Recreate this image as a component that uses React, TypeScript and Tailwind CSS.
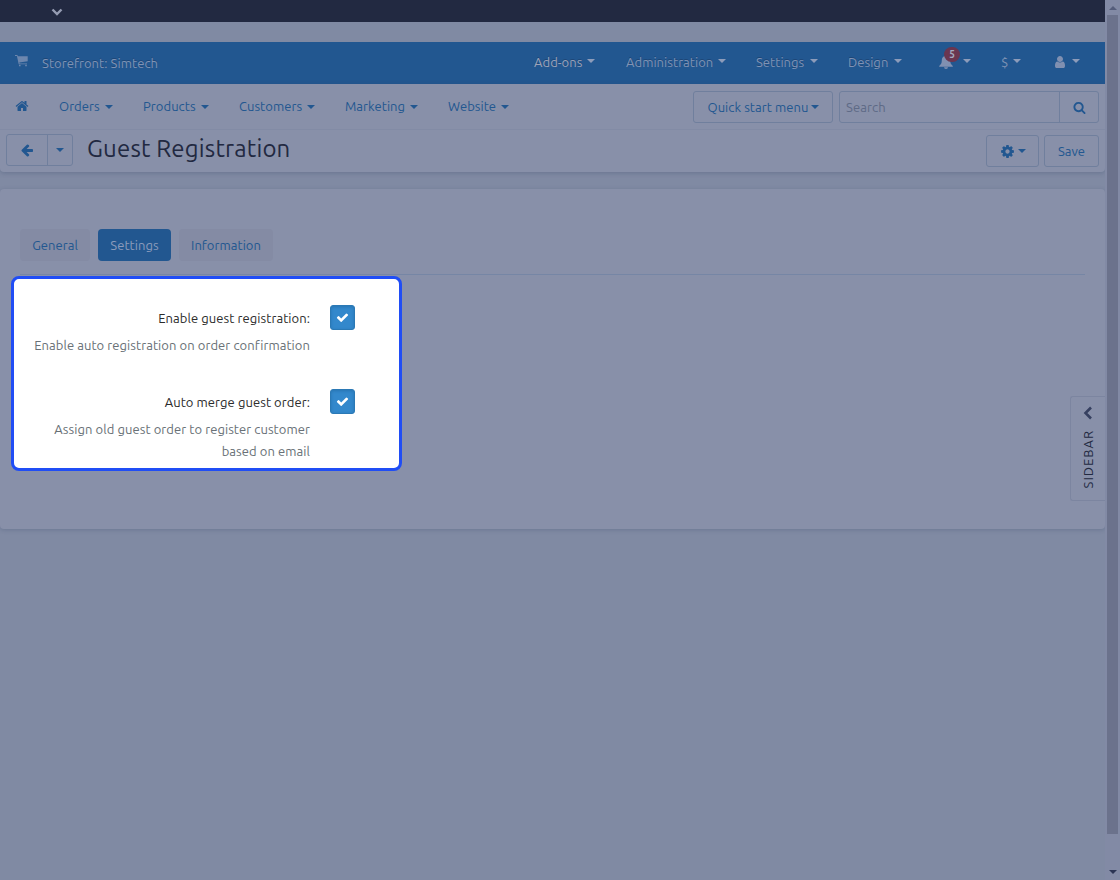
import type { ReactNode } from "react";
import { clsx } from "clsx";

const ICONS = {
  home: "M1472 992v480q0 26-19 45t-45 19h-384v-384h-256v384h-384q-26 0-45-19t-19-45v-480q0-1 .5-3t.5-3l575-474 575 474q1 2 1 6zm223-69l-62 74q-8 9-21 11h-3q-13 0-21-7l-692-577-692 577q-12 8-24 7-13-2-21-11l-62-74q-8-10-7-23.5t11-21.5l719-599q32-26 76-26t76 26l244 204v-195q0-14 9-23t23-9h192q14 0 23 9t9 23v408l219 182q10 8 11 21.5t-7 23.5z",
  arrowLeft:
    "M1664 896v128q0 53-32.5 90.5t-84.5 37.5h-704l293 294q38 36 38 90t-38 90l-75 76q-37 37-90 37-52 0-91-37l-651-652q-37-37-37-90 0-52 37-91l651-650q38-38 91-38 52 0 90 38l75 74q38 38 38 91t-38 91l-293 293h704q52 0 84.5 37.5t32.5 90.5z",
  search:
    "M1216 832q0-185-131.5-316.5t-316.5-131.5-316.5 131.5-131.5 316.5 131.5 316.5 316.5 131.5 316.5-131.5 131.5-316.5zm512 832q0 52-38 90t-90 38q-54 0-90-38l-343-342q-179 124-399 124-143 0-273.5-55.5t-225-150-150-225-55.5-273.5 55.5-273.5 150-225 225-150 273.5-55.5 273.5 55.5 225 150 150 225 55.5 273.5q0 220-124 399l343 343q37 37 37 90z",
  cog: "M1152 896q0-106-75-181t-181-75-181 75-75 181 75 181 181 75 181-75 75-181zm512-109v222q0 12-8 23t-20 13l-185 28q-19 54-39 91 35 50 107 138 10 12 10 25t-9 23q-27 37-99 108t-94 71q-12 0-26-9l-138-108q-44 23-91 38-16 136-29 186-7 28-36 28h-222q-14 0-24.5-8.5t-11.5-21.5l-28-184q-49-16-90-37l-141 107q-10 9-25 9-14 0-25-11-126-114-165-168-7-10-7-23 0-12 8-23 15-21 51-66.5t54-70.5q-27-50-41-99l-183-27q-13-2-21-12.5t-8-23.5v-222q0-12 8-23t19-13l186-28q14-46 39-92-40-57-107-138-10-12-10-24 0-10 9-23 26-36 98.5-107.5t94.5-71.5q13 0 26 10l138 107q44-23 91-38 16-136 29-186 7-28 36-28h222q14 0 24.5 8.5t11.5 21.5l28 184q49 16 90 37l142-107q9-9 24-9 13 0 25 10 129 119 165 170 7 8 7 22 0 12-8 23-15 21-51 66.5t-54 70.5q26 50 41 98l183 28q13 2 21 12.5t8 23.5z",
  user: "M1536 1399q0 109-62.5 187t-150.5 78h-854q-88 0-150.5-78t-62.5-187q0-85 8.5-160.5t31.5-152 58.5-131 94-89 134.5-34.5q131 128 313 128t313-128q76 0 134.5 34.5t94 89 58.5 131 31.5 152 8.5 160.5zm-256-887q0 159-112.5 271.5t-271.5 112.5-271.5-112.5-112.5-271.5 112.5-271.5 271.5-112.5 271.5 112.5 112.5 271.5z",
  check:
    "M1671 566q0 40-28 68l-724 724-136 136q-28 28-68 28t-68-28l-136-136-362-362q-28-28-28-68t28-68l136-136q28-28 68-28t68 28l294 295 656-657q28-28 68-28t68 28l136 136q28 28 28 68z",
};

function Icon({ name, className }: { name: keyof typeof ICONS; className?: string }) {
  return (
    <svg viewBox="0 0 1792 1792" fill="currentColor" className={clsx("block shrink-0", className)} aria-hidden>
      <path d={ICONS[name]} />
    </svg>
  );
}

function Caret({ className }: { className?: string }) {
  return (
    <span
      className={clsx("block h-0 w-0 shrink-0 border-x-4 border-t-4 border-x-transparent border-t-current", className)}
    />
  );
}

const topMenu = [
  { label: "Add-ons", className: "w-12", itemClass: "mr-[31px] text-[#9ba3b9]" },
  { label: "Administration", className: "w-[87px]", itemClass: "mr-[30px]" },
  { label: "Settings", className: "w-[49px]", itemClass: "mr-[30px]" },
  { label: "Design", className: "w-[41px]", itemClass: "mr-[37px]" },
];

const mainMenu = [
  { label: "Orders", className: "w-[41px]" },
  { label: "Products", className: "w-[53px]" },
  { label: "Customers", className: "w-[63px]" },
  { label: "Marketing", className: "w-[60px]" },
  { label: "Website", className: "w-12" },
];

function TopBar() {
  return (
    <nav className="flex h-[42px] items-start bg-[#225790] text-[#7f93b5]">
      <svg viewBox="0 0 14 12" className="mt-[13px] ml-[15px] h-3 w-3.5 fill-[#6d87ae]" aria-hidden>
        <path d="M0 0h2.400l.4 1.200H12.700V6.300L4.300 7.500l.2.900H12v.8H3.700L1.900.9H0z" />
        <path d="M4 9.700h1.600v1.500H4zM10.200 9.700h1.600v1.500h-1.600z" />
      </svg>
      <span className="mt-[11px] ml-[13px] w-[492px] tracking-[0.07px] [text-shadow:0_-1px_0_#1d4677]">
        Storefront: Simtech
      </span>
      {topMenu.map((item) => (
        <a key={item.label} className={clsx("mt-2.5 flex gap-[5px] [text-shadow:0_-1px_0_#1d4677]", item.itemClass)}>
          <span className={clsx("tracking-[0.05px]", item.className)}>{item.label}</span>
          <Caret className="mt-[7px] text-[#8d9cba]" />
        </a>
      ))}
      <a className="relative mt-[13px] mr-[30px] flex">
        <svg viewBox="0 0 14 14" className="h-3.5 w-3.5 fill-[#8090b1]" aria-hidden>
          <path d="M6 1a1 1 0 0 1 2 0c2 .5 3.200 2 3.200 4.300 0 3 .9 4.200 2.600 5.700v.7H.2V11C1.900 9.500 2.800 8.300 2.800 5.300 2.800 3 4 1.500 6 1zM5 12.300h4a2 1.700 0 0 1-4 0z" />
        </svg>
        <span className="absolute -top-2 left-[5px] flex h-[15px] w-4 items-center justify-center rounded-full bg-[#6a3650] text-[10px] leading-none font-semibold text-[#a4abc0]">
          5
        </span>
        <Caret className="mt-1 ml-2.5 text-[#8d9cba]" />
      </a>
      <a className="mt-2.5 mr-[32px] flex gap-[5px]">
        <span className="w-[7px]">$</span>
        <Caret className="mt-[7px] text-[#8d9cba]" />
      </a>
      <a className="mt-3 flex gap-[5px]">
        <Icon name="user" className="mt-px h-3.5 w-3.5 text-[#8090b1]" />
        <Caret className="mt-[5px] text-[#8d9cba]" />
      </a>
    </nav>
  );
}

function Button({ className, children }: { className?: string; children: ReactNode }) {
  return (
    <button
      type="button"
      className={clsx(
        "flex h-8 shrink-0 items-center justify-center rounded-[3px] border border-[#707f9d] text-[#225790]",
        className,
      )}
    >
      {children}
    </button>
  );
}

function Header() {
  return (
    <header className="rounded-b bg-[#8890a9] shadow-[0_1px_5px_rgba(45,62,100,0.3)]">
      <div className="flex h-[46px] items-start border-b border-[#828ba5] text-[#225790]">
        <Icon name="home" className="mt-[15px] mr-[30px] ml-[15px] h-3.5 w-3.5" />
        <div className="mt-3 flex gap-[30px]">
          {mainMenu.map((item) => (
            <a key={item.label} className="flex items-center gap-[5px]">
              <span className={clsx("tracking-[0.06px]", item.className)}>{item.label}</span>
              <Caret className="mt-0.5" />
            </a>
          ))}
        </div>
        <div className="mt-[7px] mr-1.5 ml-auto flex">
          <Button className="mr-1.5 w-[140px] gap-0.5 tracking-[0.07px]">
            Quick start menu
            <Caret />
          </Button>
          <div className="flex h-8 w-[260px] rounded-[3px] border border-[#707f9d]">
            <span className="flex flex-1 items-center pl-1.5 tracking-[0.1px] text-[#5e6a86]">Search</span>
            <span className="flex w-[39px] items-center justify-center border-l border-[#707f9d]">
              <Icon name="search" className="h-[13px] w-[13px]" />
            </span>
          </div>
        </div>
      </div>
      <div className="flex h-[42px] items-start px-1.5">
        <div className="mt-1 flex h-8 w-[67px] rounded-[3px] border border-[#707f9d] text-[#225790]">
          <span className="flex w-[41px] items-center justify-center border-r border-[#707f9d]">
            <Icon name="arrowLeft" className="h-3.5 w-3.5" />
          </span>
          <span className="flex flex-1 items-center justify-center">
            <Caret />
          </span>
        </div>
        <h1 className="mt-[3px] ml-3.5 text-2xl leading-8 tracking-[0.18px] text-[#222941]">Guest Registration</h1>
        <div className="mt-[5px] ml-auto flex gap-[5px]">
          <Button className="w-[53px] gap-[3px]">
            <Icon name="cog" className="h-[15px] w-[15px]" />
            <Caret />
          </Button>
          <Button className="w-[55px]">Save</Button>
        </div>
      </div>
    </header>
  );
}

function SettingRow({ label, className, children }: { label: string; className?: string; children: ReactNode }) {
  return (
    <div className={clsx("flex gap-5", className)}>
      <div className="w-[296px] text-right tracking-[0.07px]">
        <div className="mt-0.5 leading-[22px] text-[#2b2b2b]">{label}</div>
        <p className="mt-[5px] leading-[22px] text-[#687076]">{children}</p>
      </div>
      <span className="flex h-[25px] w-[25px] items-center justify-center rounded-[3px] border border-[#2b79b5] bg-[#3388cc] text-white shadow-[inset_0_1px_3px_rgba(20,80,130,0.35)]">
        <Icon name="check" className="h-[13px] w-[13px]" />
      </span>
    </div>
  );
}

function SidebarToggle() {
  return (
    <div className="flex h-[105px] w-[35px] flex-col items-center rounded-l-[3px] border border-r-0 border-[#7c85a0] text-[#222941]">
      <svg viewBox="0 0 10 14" className="mt-[9px] h-3.5 w-2.5 fill-none stroke-[#364060] stroke-[2.6]" aria-hidden>
        <path d="M8 1.500 2.500 7 8 12.500" />
      </svg>
      <span className="mt-[10px] rotate-180 tracking-[1px] [writing-mode:vertical-rl]">SIDEBAR</span>
    </div>
  );
}

function Panel() {
  return (
    <section className="mt-[17px] flex h-[340px] rounded bg-[#8890a9] shadow-[0_1px_4px_rgba(45,62,100,0.25)]">
      <div className="w-[1070px] pt-10">
        <div className="ml-5 flex w-[1065px] gap-2 border-b border-[#7686a5] pb-[13px] tracking-[0.05px] text-[#225790]">
          <span className="flex h-8 w-[70px] items-center justify-center rounded bg-[#848ba4]">General</span>
          <span className="flex h-8 w-[73px] items-center justify-center rounded bg-[#225790] text-[#8b9bbb]">
            Settings
          </span>
          <span className="flex h-8 w-[94px] items-center justify-center rounded bg-[#848ba4]">Information</span>
        </div>
        <div className="mt-px ml-[11px] h-[195px] w-[391px] rounded-lg border-[3px] border-[#204df5] bg-white pt-[26px]">
          <SettingRow label="Enable guest registration:" className="h-[84px]">
            Enable auto registration on order confirmation
          </SettingRow>
          <SettingRow label="Auto merge guest order:">
            Assign old guest order to register customer
            <br />
            based on email
          </SettingRow>
        </div>
      </div>
      <div className="mt-[207px]">
        <SidebarToggle />
      </div>
    </section>
  );
}

export default function App() {
  return (
    <div className="flex h-[880px] w-[1120px] overflow-hidden bg-[#808aa3] font-[Ubuntu,'Noto_Sans',sans-serif] text-[13px] leading-5 whitespace-nowrap">
      <main className="w-[1105px]">
        <div className="mb-5 h-[22px] bg-[#222941] pt-2 pl-[51px]">
          <svg viewBox="0 0 12 8" className="h-2 w-3 fill-none stroke-[#959cb2] stroke-[2.4]" aria-hidden>
            <path d="M1.500 1.500 6 6l4.500-4.500" />
          </svg>
        </div>
        <TopBar />
        <Header />
        <Panel />
      </main>
      <div className="flex w-[15px] flex-col items-center bg-[#828aa5]">
        <span className="mt-1.5 h-0 w-0 border-x-4 border-b-4 border-x-transparent border-b-[#545d7b]" />
        <span className="mt-[5px] h-[819px] w-[11px] bg-[#6b728c]" />
        <span className="mt-9 h-0 w-0 border-x-4 border-t-4 border-x-transparent border-t-[#2b3454]" />
      </div>
    </div>
  );
}
